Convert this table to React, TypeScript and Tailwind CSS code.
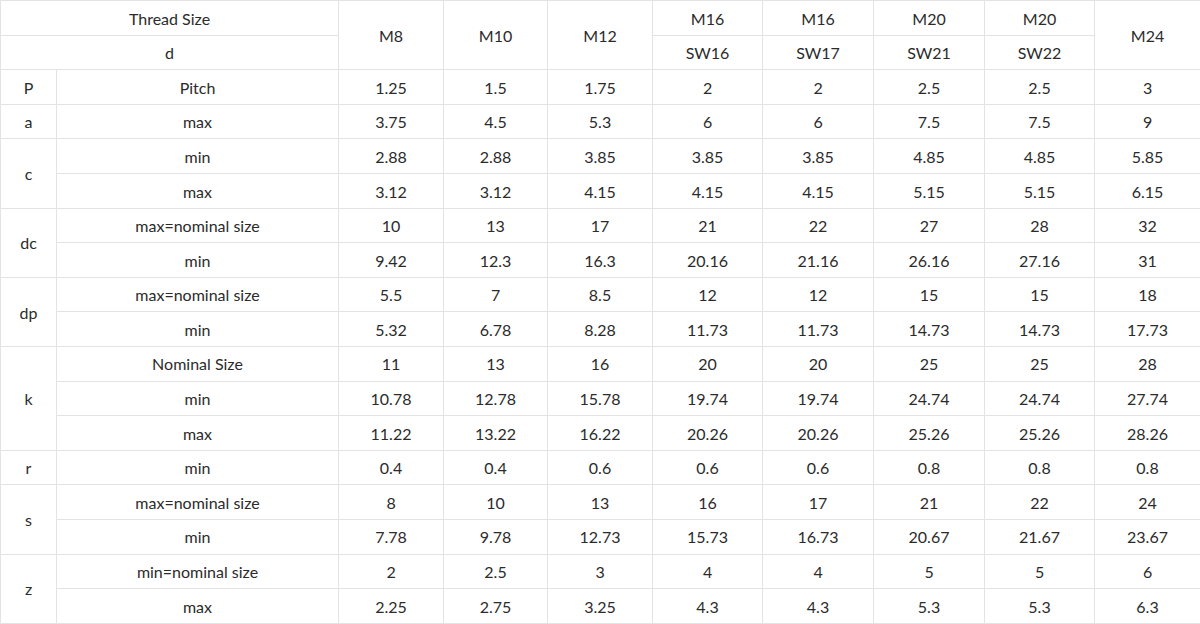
const cols = [56, 282, 105, 104, 105, 110, 111, 111, 110, 106];

type Group = { sym: string; rows: [string, string[]][] };

const groups: Group[] = [
  { sym: "P", rows: [["Pitch", ["1.25", "1.5", "1.75", "2", "2", "2.5", "2.5", "3"]]] },
  { sym: "a", rows: [["max", ["3.75", "4.5", "5.3", "6", "6", "7.5", "7.5", "9"]]] },
  {
    sym: "c",
    rows: [
      ["min", ["2.88", "2.88", "3.85", "3.85", "3.85", "4.85", "4.85", "5.85"]],
      ["max", ["3.12", "3.12", "4.15", "4.15", "4.15", "5.15", "5.15", "6.15"]],
    ],
  },
  {
    sym: "dc",
    rows: [
      ["max=nominal size", ["10", "13", "17", "21", "22", "27", "28", "32"]],
      ["min", ["9.42", "12.3", "16.3", "20.16", "21.16", "26.16", "27.16", "31"]],
    ],
  },
  {
    sym: "dp",
    rows: [
      ["max=nominal size", ["5.5", "7", "8.5", "12", "12", "15", "15", "18"]],
      ["min", ["5.32", "6.78", "8.28", "11.73", "11.73", "14.73", "14.73", "17.73"]],
    ],
  },
  {
    sym: "k",
    rows: [
      ["Nominal Size", ["11", "13", "16", "20", "20", "25", "25", "28"]],
      ["min", ["10.78", "12.78", "15.78", "19.74", "19.74", "24.74", "24.74", "27.74"]],
      ["max", ["11.22", "13.22", "16.22", "20.26", "20.26", "25.26", "25.26", "28.26"]],
    ],
  },
  { sym: "r", rows: [["min", ["0.4", "0.4", "0.6", "0.6", "0.6", "0.8", "0.8", "0.8"]]] },
  {
    sym: "s",
    rows: [
      ["max=nominal size", ["8", "10", "13", "16", "17", "21", "22", "24"]],
      ["min", ["7.78", "9.78", "12.73", "15.73", "16.73", "20.67", "21.67", "23.67"]],
    ],
  },
  {
    sym: "z",
    rows: [
      ["min=nominal size", ["2", "2.5", "3", "4", "4", "5", "5", "6"]],
      ["max", ["2.25", "2.75", "3.25", "4.3", "4.3", "5.3", "5.3", "6.3"]],
    ],
  },
];

const cell = "border border-[#e3e3e3] text-center align-middle h-[34.6px] p-0 pt-[1.5px] leading-[20px]";

export default function App() {
  return (
    <div className="w-[1200px] h-[624px] bg-white text-[#2b2b2b] text-[16px] font-['Lato','Noto_Sans',sans-serif] overflow-hidden">
      <table className="w-[1200px] table-fixed border-collapse">
        <colgroup>
          {cols.map((w, i) => (
            <col key={i} style={{ width: w }} />
          ))}
        </colgroup>
        <tbody>
          <tr>
            <td colSpan={2} className={cell}>Thread Size</td>
            <td rowSpan={2} className={cell}>M8</td>
            <td rowSpan={2} className={cell}>M10</td>
            <td rowSpan={2} className={cell}>M12</td>
            <td className={cell}>M16</td>
            <td className={cell}>M16</td>
            <td className={cell}>M20</td>
            <td className={cell}>M20</td>
            <td rowSpan={2} className={cell}>M24</td>
          </tr>
          <tr>
            <td colSpan={2} className={cell}>d</td>
            <td className={cell}>SW16</td>
            <td className={cell}>SW17</td>
            <td className={cell}>SW21</td>
            <td className={cell}>SW22</td>
          </tr>
          {groups.map((g) =>
            g.rows.map(([label, vals], i) => (
              <tr key={g.sym + i}>
                {i === 0 && (
                  <td rowSpan={g.rows.length} className={cell}>
                    {g.sym}
                  </td>
                )}
                <td className={cell}>{label}</td>
                {vals.map((v, j) => (
                  <td key={j} className={cell}>
                    {v}
                  </td>
                ))}
              </tr>
            ))
          )}
        </tbody>
      </table>
    </div>
  );
}
